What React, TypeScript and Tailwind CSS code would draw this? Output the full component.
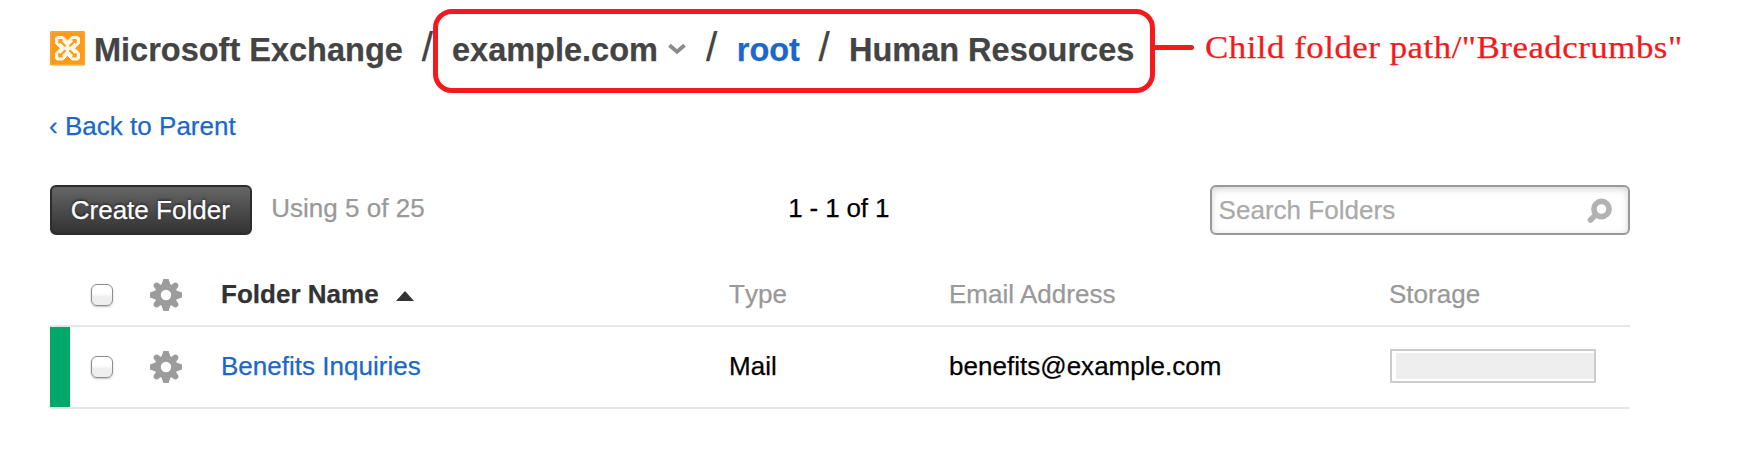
import React from "react";

const ExchangeLogo = () => (
  <svg className="mt-[31px] h-[35px] w-[35px] shrink-0" viewBox="0 0 35 35" fill="none">
    <rect width="35" height="34.5" rx="1.5" fill="#fd9a17" />
    <rect x="1" y="1" width="33" height="32.5" rx="1" stroke="#fda83a" />
    <path
      d="M7 5.500H13L17.500 10L22 5.500H28L29.500 7V12.500L24.500 17.200L29.500 22V27.500L28 29H22L17.500 24.500L13 29H7L5.500 27.500V22L10.500 17.200L5.500 12.500V7z"
      fill="#fff8ea"
      stroke="#fff8ea"
      strokeLinejoin="round"
    />
    <g stroke="#fd9a17" strokeWidth="2.1" strokeLinecap="round" strokeLinejoin="round">
      {[0, 90, 180, 270].map((a) => (
        <path key={a} transform={`rotate(${a} 17.5 17.25)`} d="M9.300 11.500V9H11.800M9.500 9.200L15 14.700" />
      ))}
    </g>
  </svg>
);

const Gear = () => (
  <svg className="h-8 w-8" viewBox="-16 -16 32 32">
    <g fill="#9c9c9c">
      {[0, 90, 180, 270].map((a) => (
        <path key={a} transform={`rotate(${a})`} d="M-5-9 L-2.600-16 H2.600 L5-9z" />
      ))}
      {[45, 135, 225, 315].map((a) => (
        <path key={a} transform={`rotate(${a})`} d="M-4.500-8 L-3-12.500 A3.100 3.100 0 1 1 3-12.500 L4.500-8z" />
      ))}
      <path
        fillRule="evenodd"
        d="M0-11.300a11.300 11.300 0 1 0 0 22.600a11.300 11.300 0 1 0 0-22.600zM0-5.200a5.200 5.200 0 1 1 0 10.400a5.200 5.200 0 1 1 0-10.400z"
      />
    </g>
  </svg>
);

const Checkbox = () => (
  <span
    role="checkbox"
    aria-checked="false"
    className="block h-[22px] w-[22px] rounded-[6px] border-[1.500px] border-[#8c8c8c] bg-linear-to-b from-white from-40% to-[#efefef] to-60% shadow-[0_1px_2px_rgba(0,0,0,0.25)]"
  />
);

const Slash = ({ className = "mt-[10px]" }: { className?: string }) => (
  <span className={`block w-[11.200px] shrink-0 text-[40.500px] leading-[46px] ${className}`}>/</span>
);

const columns = "grid grid-cols-[41px_59px_71px_508px_220px_440px_1fr]";

export default function App() {
  return (
    <main className="h-[474px] w-[1742px] overflow-hidden bg-white pl-[50px] font-['Liberation_Sans',Arial,sans-serif] text-[26px] leading-[30px] tracking-[0.020px] whitespace-nowrap text-black [-webkit-text-stroke:0.250px]">
      <header className="flex h-[111px] items-start text-[32.500px] leading-[36px] tracking-normal text-[#444]">
        <ExchangeLogo />
        <h1 className="mt-8 ml-[9px] w-[327.800px] shrink-0 font-bold">Microsoft Exchange</h1>
        <Slash className="mt-[24px]" />
        <nav className="mt-[9px] flex h-[84px] w-[722px] shrink-0 items-start rounded-[19px] border-[5px] border-[#f3191d] pl-[14px]">
          <span className="mt-[18px] w-[216px] shrink-0 font-bold">example.com</span>
          <svg className="mt-[29px] h-[12px] w-[18px] shrink-0" viewBox="0 0 18 12" fill="none">
            <path d="M1.500 2.200L9 8.700l7.500-6.500" stroke="#8b8b8b" strokeWidth="3.800" />
          </svg>
          <Slash className="mt-[10px] ml-5" />
          <a className="mt-[18px] ml-[19.600px] w-[81.700px] shrink-0 font-bold text-[#1b68c8]">root</a>
          <Slash />
          <span className="mt-[18px] ml-[19.300px] font-bold">Human Resources</span>
        </nav>
        <span className="mt-[45px] -ml-px h-[5px] w-10 shrink-0 rounded-r-sm bg-[#f3191d]" />
        <span className="mt-[29px] ml-[10.700px] block origin-left scale-x-[1.090] font-['Liberation_Serif',serif] text-[32px] tracking-[0.450px] text-[#f3191d]">
          Child folder path/"Breadcrumbs"
        </span>
      </header>

      <a className="-ml-px block h-[74px] text-[#1b68c8]">‹ Back to Parent</a>

      <section className="flex h-[50px] w-[1580px] items-start">
        <button className="h-[50px] w-[202px] shrink-0 rounded-[6px] border-2 border-[#2d2d2d] bg-linear-to-b from-[#666] to-[#333] pl-[18.700px] text-left text-white [text-shadow:0_-1px_3px_rgba(0,0,0,0.7)]">
          Create Folder
        </button>
        <span className="mt-2 ml-[19.200px] w-[517px] shrink-0 text-[#999]">Using 5 of 25</span>
        <span className="mt-2 w-[421.800px] shrink-0 tracking-[-0.150px]">1 - 1 of 1</span>
        <div className="flex h-[50px] w-[420px] shrink-0 items-start justify-between rounded-[6px] border-2 border-[#999] pt-2 pr-[16px] pl-[6.600px] text-[#aaa] shadow-[inset_0_2px_7px_rgba(0,0,0,0.18)]">
          <span>Search Folders</span>
          <svg className="mt-[3px] h-[26px] w-[25px]" viewBox="0 0 25 26" fill="none" stroke="#b2b2b2">
            <circle cx="14.500" cy="11" r="7.600" strokeWidth="5.600" />
            <path d="M8.500 17l-5 5" strokeWidth="5.600" strokeLinecap="round" />
          </svg>
        </div>
      </section>

      <section className="w-[1580px] pt-[42px]">
        <div className={`${columns} h-[50px] items-start border-b-2 border-[#e6e6e6] text-[#999]`}>
          <span />
          <div className="pt-[7px]">
            <Checkbox />
          </div>
          <div className="pt-[2px]">
            <Gear />
          </div>
          <div className="flex items-start pt-[2px] font-bold text-[#333]">
            <span className="w-[175px]">Folder Name</span>
            <svg className="mt-3 h-[10px] w-[18px]" viewBox="0 0 18 10">
              <path d="M9 0l9 10H0z" fill="#333" />
            </svg>
          </div>
          <span className="pt-[2px] [font-kerning:none]">Type</span>
          <span className="pt-[2px]">Email Address</span>
          <span className="pt-[2px]">Storage</span>
        </div>
        <div className={`${columns} h-[82px] items-start border-b-2 border-[#e6e6e6]`}>
          <span className="h-20 w-5 bg-[#00a96b]" />
          <div className="pt-[29px]">
            <Checkbox />
          </div>
          <div className="pt-6">
            <Gear />
          </div>
          <a className="pt-6 text-[#1b68c8]">Benefits Inquiries</a>
          <span className="pt-6">Mail</span>
          <span className="pt-6">benefits@example.com</span>
          <div className="mt-[22px] ml-px h-[34px] w-[206px] border-2 border-[#ccc] py-[2px] pl-1">
            <div className="h-full bg-[#eee]" />
          </div>
        </div>
      </section>
    </main>
  );
}
